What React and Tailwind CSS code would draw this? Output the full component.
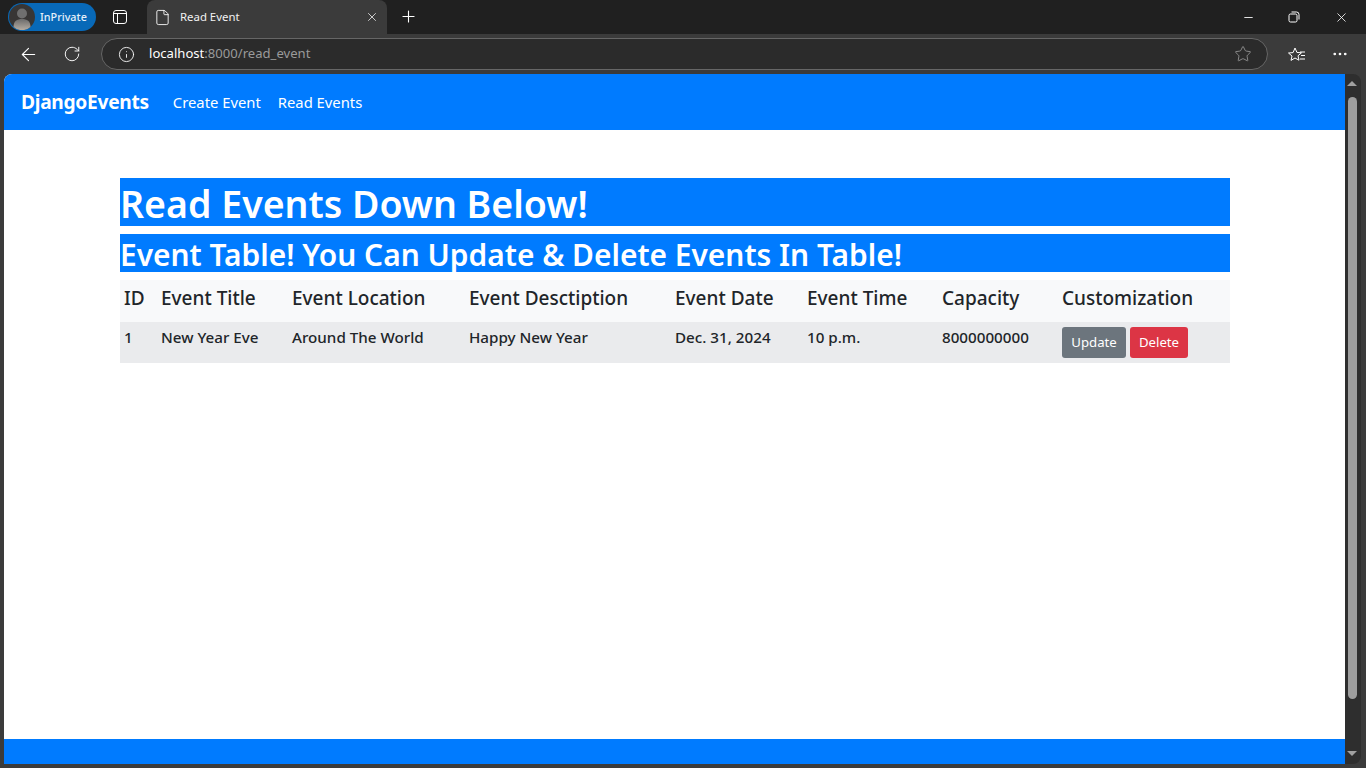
import { ArrowLeft, RotateCw, Info, Star, X, Plus, Minus, File, MoreHorizontal } from 'lucide-react'

const FONT = "font-['Noto_Sans',sans-serif]"

const COLUMNS = [
  { label: 'ID', width: 'w-[37px]' },
  { label: 'Event Title', width: 'w-[131px]' },
  { label: 'Event Location', width: 'w-[177px]' },
  { label: 'Event Desctiption', width: 'w-[206px]' },
  { label: 'Event Date', width: 'w-[132px]' },
  { label: 'Event Time', width: 'w-[135px]' },
  { label: 'Capacity', width: 'w-[120px]' },
  { label: 'Customization', width: 'w-[172px]' },
]

const ROW = ['1', 'New Year Eve', 'Around The World', 'Happy New Year', 'Dec. 31, 2024', '10 p.m.', '8000000000']

function TabStrip() {
  return (
    <div className="h-[34px] bg-[#202020] flex items-end text-white shrink-0">
      {/* InPrivate pill */}
      <div className="ml-2 mb-[3px] h-7 w-[88px] rounded-full bg-[#0869b8] flex items-center">
        <svg width="26" height="26" viewBox="0 0 26 26" className="ml-[1px] shrink-0">
          <defs>
            <linearGradient id="av" x1="0" y1="0" x2="0" y2="1">
              <stop offset="0" stopColor="#6b6b6b" />
              <stop offset="1" stopColor="#b5ada3" />
            </linearGradient>
          </defs>
          <circle cx="13" cy="13" r="13" fill="#383635" />
          <circle cx="13" cy="9.5" r="5" fill="#6f6f6f" />
          <path d="M4.5 23c0-6 3.500-8 8.500-8s8.500 2 8.500 8a13 13 0 0 1-17 0z" fill="url(#av)" />
        </svg>
        <span className={`ml-[5px] text-[10.8px] font-medium leading-none text-[#e4f0fa] ${FONT}`}>InPrivate</span>
      </div>

      <svg width="16" height="16" viewBox="0 0 16 16" fill="none" stroke="#fff" className="ml-4 mb-[9px] shrink-0">
        <rect x="1.500" y="1.500" width="13" height="13" rx="2.500" />
        <path d="M1.500 4.500h13M5.500 4.500v10" />
      </svg>

      {/* Active tab */}
      <div className="ml-[19px] h-[34px] w-[240px] rounded-t-lg bg-[#3b3b3b] flex items-center">
        <File size={17} strokeWidth={1.25} className="ml-[7px] shrink-0" />
        <span className={`ml-[9px] text-[11.4px] leading-none text-[#f2f2f2] ${FONT}`}>Read Event</span>
        <X size={14} strokeWidth={1.5} className="ml-auto mr-[8px] text-[#e0e0e0]" />
      </div>

      <Plus size={19} strokeWidth={1.4} className="ml-[12px] mb-[8px]" />

      <div className="ml-auto flex items-center h-[34px] pr-[17px]">
        <Minus size={13} strokeWidth={1.6} className="mr-[33px]" />
        <svg width="12" height="12" viewBox="0 0 12 12" fill="none" stroke="#fff" className="mr-[34px]">
          <rect x="1" y="3" width="8" height="8" rx="1.500" />
          <path d="M3.500 1h5A2.500 2.500 0 0 1 11 3.500v5" />
        </svg>
        <X size={15} strokeWidth={1.3} />
      </div>
    </div>
  )
}

function Toolbar() {
  return (
    <div className="h-[40px] flex items-center text-white shrink-0">
      <ArrowLeft size={21} strokeWidth={1.25} className="ml-[18px]" />
      <RotateCw size={18} strokeWidth={1.25} className="ml-[24px]" />
      <div className="ml-[20px] h-8 w-[1167px] rounded-full border border-[#666] bg-[#2b2b2b] flex items-center">
        <Info size={17} strokeWidth={1.25} className="ml-[16px]" />
        <span className={`ml-[14px] text-[13.1px] leading-none ${FONT}`}>
          <span className="text-[#ffffff]">localhost</span>
          <span className="text-[#9a9a9a]">:8000/read_event</span>
        </span>
        <Star size={18} strokeWidth={1.1} className="ml-auto mr-[15px] text-[#9b9b9b]" />
      </div>
      <svg width="18" height="18" viewBox="0 0 18 18" fill="none" stroke="#fff" className="ml-[20px]">
        <path d="M8 2l1.900 4.400 4.600.4-3.500 3 1 4.400L8 12l-4 2.400 1-4.400-3.500-3 4.600-.4z" strokeLinejoin="round" transform="translate(-1 1)" />
        <path d="M12 7h5M13 10.500h4M12 14h5" />
      </svg>
      <MoreHorizontal size={18} strokeWidth={1.6} className="ml-[25px]" />
    </div>
  )
}

function Scrollbar() {
  return (
    <div className="w-4 bg-[#2e2e2e] rounded-r-lg flex flex-col items-center pr-[2px] shrink-0">
      <div className="mt-[7px] w-0 h-0 border-x-[5px] border-x-transparent border-b-[5px] border-b-[#a0a0a0]" />
      <div className="mt-[11px] w-[9px] flex-1 rounded-full bg-[#9e9e9e]" />
      <div className="mt-[52px] mb-[8px] w-0 h-0 border-x-[5px] border-x-transparent border-t-[5px] border-t-[#a0a0a0]" />
    </div>
  )
}

function Page() {
  return (
    <div className={`flex-1 bg-white rounded-tl-lg overflow-hidden flex flex-col ${FONT}`}>
      <nav className="h-14 bg-[#007bff] flex items-center text-white shrink-0">
        <span className="ml-[17px] text-[19.2px] font-bold tracking-[-0.3px]">DjangoEvents</span>
        <span className="ml-6 text-[14.8px]">Create Event</span>
        <span className="ml-[17px] text-[14.8px]">Read Events</span>
      </nav>

      <main className="flex-1 pt-12 pl-[116px]">
        <div className="w-[1110px]">
          <h1 className="h-12 bg-[#007bff] text-white text-[37.5px] leading-[52px] font-semibold whitespace-nowrap">
            Read Events Down Below!
          </h1>
          <h2 className="mt-2 h-[38px] bg-[#007bff] text-white text-[29.9px] leading-[41px] font-semibold whitespace-nowrap">
            Event Table! You Can Update &amp; Delete Events In Table!
          </h2>
          <table className="mt-2 w-[1110px] table-fixed border-collapse text-[#212529]">
            <thead>
              <tr className="h-[42px] bg-[#f8f9fa]">
                {COLUMNS.map(c => (
                  <th key={c.label} className={`${c.width} px-1 pb-[5px] text-left text-[19px] font-medium whitespace-nowrap`}>
                    {c.label}
                  </th>
                ))}
              </tr>
            </thead>
            <tbody>
              <tr className="h-[41px] bg-[#eaebed] align-top">
                {ROW.map((v, i) => (
                  <td key={i} className="px-1 pt-[4px] text-[15.2px] font-medium whitespace-nowrap">{v}</td>
                ))}
                <td className="px-1 pt-[5px]">
                  <div className="flex gap-1">
                    <button className="h-[31px] w-16 pt-px rounded-[3px] bg-[#6c757d] text-white text-[13.2px]">Update</button>
                    <button className="h-[31px] w-[58px] pt-px rounded-[3px] bg-[#dc3545] text-white text-[13.2px]">Delete</button>
                  </div>
                </td>
              </tr>
            </tbody>
          </table>
        </div>
      </main>

      <footer className="h-[25px] bg-[#007bff] shrink-0" />
    </div>
  )
}

export default function App() {
  return (
    <div className="w-[1366px] h-[768px] bg-[#3b3b3b] flex flex-col overflow-hidden">
      <TabStrip />
      <Toolbar />
      <div className="flex-1 flex pl-1 pr-[5px] pb-1 min-h-0">
        <Page />
        <Scrollbar />
      </div>
    </div>
  )
}
